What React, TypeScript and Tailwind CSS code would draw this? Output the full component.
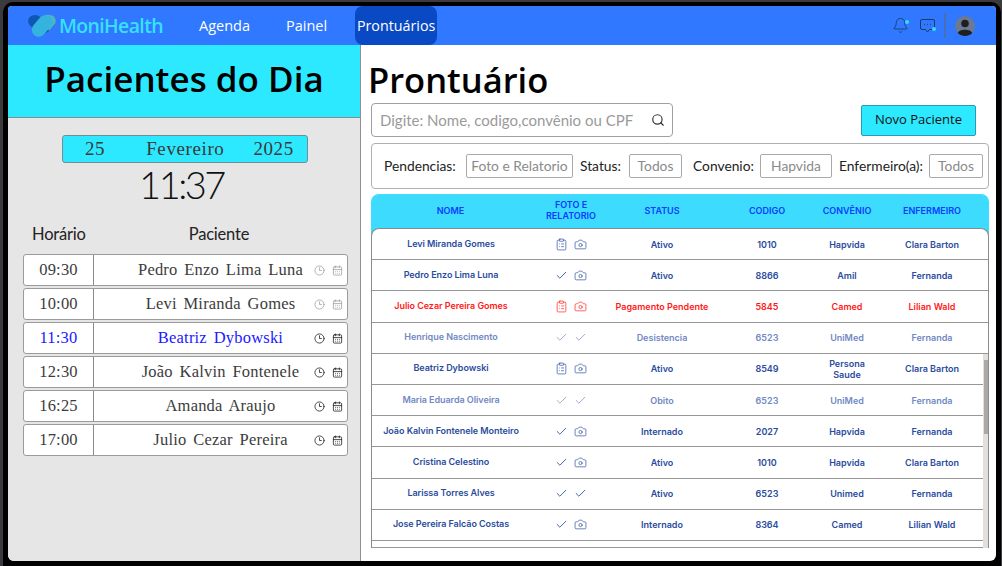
import { Bell, Camera, CalendarDays, Check, ClipboardList, Clock3, Search } from "lucide-react";

type Row = { n: string; a: "clip" | "check"; b: "cam" | "check"; s: string; c: string; v: string; e: string; t: "n" | "r" | "d" };

const rows: Row[] = [
  { n: "Levi Miranda Gomes", a: "clip", b: "cam", s: "Ativo", c: "1010", v: "Hapvida", e: "Clara Barton", t: "n" },
  { n: "Pedro Enzo Lima Luna", a: "check", b: "cam", s: "Ativo", c: "8866", v: "Amil", e: "Fernanda", t: "n" },
  { n: "Julio Cezar Pereira Gomes", a: "clip", b: "cam", s: "Pagamento Pendente", c: "5845", v: "Camed", e: "Lilian Wald", t: "r" },
  { n: "Henrique Nascimento", a: "check", b: "check", s: "Desistencia", c: "6523", v: "UniMed", e: "Fernanda", t: "d" },
  { n: "Beatriz Dybowski", a: "clip", b: "cam", s: "Ativo", c: "8549", v: "Persona Saude", e: "Clara Barton", t: "n" },
  { n: "Maria Eduarda Oliveira", a: "check", b: "check", s: "Obito", c: "6523", v: "UniMed", e: "Fernanda", t: "d" },
  { n: "João Kalvin Fontenele Monteiro", a: "check", b: "cam", s: "Internado", c: "2027", v: "Hapvida", e: "Fernanda", t: "n" },
  { n: "Cristina Celestino", a: "check", b: "cam", s: "Ativo", c: "1010", v: "Hapvida", e: "Clara Barton", t: "n" },
  { n: "Larissa Torres Alves", a: "check", b: "check", s: "Ativo", c: "6523", v: "Unimed", e: "Fernanda", t: "n" },
  { n: "Jose Pereira Falcão Costas", a: "check", b: "cam", s: "Internado", c: "8364", v: "Camed", e: "Lilian Wald", t: "n" },
];

const agenda = [
  { h: "09:30", p: "Pedro Enzo Lima Luna", tone: "dim" },
  { h: "10:00", p: "Levi Miranda Gomes", tone: "dim" },
  { h: "11:30", p: "Beatriz Dybowski", tone: "active" },
  { h: "12:30", p: "João Kalvin Fontenele", tone: "normal" },
  { h: "16:25", p: "Amanda Araujo", tone: "normal" },
  { h: "17:00", p: "Julio Cezar Pereira", tone: "normal" },
];

function Filter({ label, value, labelW, inputW, ml }: { label: string; value: string; labelW: string; inputW: string; ml: string }) {
  return (
    <div className={`flex items-center ${ml}`}>
      <span className={`${labelW} whitespace-nowrap text-[13.8px] text-[#222] font-['Lato',sans-serif]`}>{label}</span>
      <span className={`${inputW} flex h-[24px] items-center justify-center whitespace-nowrap rounded-[2px] border border-[#a9a9a9] text-[13.8px] text-[#8a8a8a] font-['Lato',sans-serif]`}>
        {value}
      </span>
    </div>
  );
}

function Logo() {
  return (
    <svg width="30" height="24" viewBox="0 0 30 24" className="shrink-0">
      <path d="M14 22 L3 11.5 C-1 7 2 1 8 1 C11 1 13 2.5 14.5 5 C16 2.5 18 1 21 1 C27 1 30 7 27 11.5 L22 17 Z" fill="#0f57b4" />
      <path d="M17 1.5 C19 0.5 23 0.5 25.5 1.5 C29 3.5 29.5 8 27.5 10.5 L22 17 L17 6 Z" fill="#4db4c4" />
      <rect x="8" y="0" width="14" height="24" rx="7" transform="rotate(40 15 12)" fill="#33b3de" />
    </svg>
  );
}

export default function App() {
  return (
    <div className="h-[566px] w-[1002px] overflow-hidden bg-[#3a3b3f] pl-[3px] pr-0 pt-[2px] font-['Inter',sans-serif]">
      <div className="h-[564px] w-[998px] rounded-t-[10px] bg-black pl-[5px] pr-[2px] pt-[4px]">
        <div className="flex h-[555px] w-[988px] flex-col overflow-hidden rounded-b-[6px] rounded-t-[4px] bg-white">
          <header className="flex h-[39px] shrink-0 items-center bg-[#2f78ff] pl-[19px] pr-[21px]">
            <Logo />
            <span className="ml-[2px] w-[102px] whitespace-nowrap text-[19.5px] font-semibold tracking-[-0.65px] text-[#38e0fa] font-['Open_Sans',sans-serif]">MoniHealth</span>
            <nav className="ml-[38px] flex h-full items-center text-[14.5px] text-white font-['Open_Sans',sans-serif]">
              <span>Agenda</span>
              <span className="ml-[36px]">Painel</span>
              <span className="ml-[28px] flex h-full w-[82px] items-center justify-center rounded-[8px] bg-[#0a49c4] text-[14.3px]">Prontuários</span>
            </nav>
            <div className="ml-auto flex items-center">
              <span className="relative">
                <Bell size={17} strokeWidth={1.2} className="text-[#1d3a66]" />
                <span className="absolute right-0 top-[3px] h-[4px] w-[4px] rounded-full bg-[#38dcf7]" />
              </span>
              <span className="relative ml-[10px]">
                <svg width="17" height="17" viewBox="0 0 17 17" fill="none" stroke="#1d3a66" strokeWidth="1">
                  <path d="M3 2.5 H14 Q15.5 2.5 15.5 4 V11 Q15.5 12.5 14 12.5 H10.5 L8.5 15 L6.5 12.5 H3 Q1.5 12.5 1.5 11 V4 Q1.5 2.5 3 2.5 Z" />
                  <path d="M5.2 7.5 H5.9 M8.2 7.5 H8.9 M11.2 7.5 H11.9" strokeWidth="1.3" />
                </svg>
                <span className="absolute bottom-[3px] right-0 h-[4px] w-[4px] rounded-full bg-[#38dcf7]" />
              </span>
              <span className="ml-[8px] h-[25px] w-[2px] bg-[#4a6fb0]" />
              <svg width="20" height="20" viewBox="0 0 20 20" className="ml-[9px]">
                <circle cx="10" cy="10" r="10" fill="#6b7a92" />
                <circle cx="10" cy="7.5" r="3.8" fill="#1f1f1f" />
                <path d="M2.8 17 C4 12.5 16 12.5 17.2 17 C15 19.3 12.5 20 10 20 C7.5 20 5 19.3 2.8 17 Z" fill="#1f1f1f" />
              </svg>
            </div>
          </header>

          <div className="flex min-h-0 flex-1">
            <aside className="flex w-[353px] shrink-0 flex-col border-r border-[#8f8f8f] bg-[#e6e6e6]">
              <div className="flex h-[73px] shrink-0 items-center justify-center border-b border-[#7f8f94] bg-[#2de9ff] pb-[5px]">
                <h1 className="text-[35px] font-[540] leading-none text-black font-['Open_Sans',sans-serif]">Pacientes do Dia</h1>
              </div>
              <div className="ml-[54px] mt-[17px] flex h-[28px] w-[246px] items-center rounded-[3px] border border-[#6f8f96] bg-[#2de9ff] text-[19px] tracking-[0.6px] text-[#3a3a3a] font-['Liberation_Serif',serif]">
                <span className="ml-[22px]">25</span>
                <span className="ml-[41px]">Fevereiro</span>
                <span className="ml-[29px]">2025</span>
              </div>
              <div className="-mt-[2px] pr-[5px] text-center text-[38px] font-light leading-[46px] tracking-[-2.5px] text-[#111] font-['Lato',sans-serif]">11:37</div>
              <div className="mt-[15px] flex text-[16.5px] leading-[24px] tracking-[-0.2px] text-[#222] font-['Lato',sans-serif]">
                <span className="ml-[24px]">Horário</span>
                <span className="ml-[103px]">Paciente</span>
              </div>
              <div className="ml-[15px] mt-[8px] flex w-[325px] flex-col gap-[2px]">
                {agenda.map((a) => {
                  const active = a.tone === "active";
                  const ic = a.tone === "dim" ? "text-[#a0a0a0]" : "text-[#1c1c1c]";
                  return (
                    <div key={a.h} className="flex h-[32px] items-stretch rounded-[3px] border border-[#9b9b9b] bg-white font-['Liberation_Serif',serif] text-[16.5px] tracking-[0.2px]">
                      <span className={`flex w-[70px] items-center justify-center border-r border-[#8a8a8a] ${active ? "text-[#1a1aff]" : "text-[#3c3c3c]"}`}>{a.h}</span>
                      <span className={`flex flex-1 items-center justify-center whitespace-nowrap pl-[38px] [word-spacing:2.5px] ${active ? "text-[#1a1aff]" : "text-[#3c3c3c]"}`}>{a.p}</span>
                      <span className={`flex w-[38px] items-center gap-[7px] pl-[5px] ${ic}`}>
                        <Clock3 size={11} strokeWidth={1.7} />
                        <CalendarDays size={11} strokeWidth={1.7} />
                      </span>
                    </div>
                  );
                })}
              </div>
            </aside>

            <main className="min-w-0 flex-1 pl-[10px] pr-[6px]">
              <h2 className="ml-[-3px] mt-[14px] text-[34.5px] font-[540] leading-[41px] text-black font-['Open_Sans',sans-serif]">Prontuário</h2>
              <div className="mt-[3px] flex items-center">
                <div className="flex h-[34px] w-[302px] items-center rounded-[4px] border border-[#a0a0a0] pl-[8px] pr-[7px]">
                  <span className="flex-1 whitespace-nowrap text-[15px] text-[#9a9a9a] font-['Lato',sans-serif]">Digite: Nome, codigo,convênio ou CPF</span>
                  <Search size={14} strokeWidth={2} className="text-[#333]" />
                </div>
                <button className="ml-[188px] h-[31px] w-[115px] rounded-[2px] border border-[#2a9bb0] bg-[#2de9ff] text-[13px] text-[#111] font-['Open_Sans',sans-serif]">Novo Paciente</button>
              </div>
              <div className="mt-[6px] flex h-[46px] w-[618px] items-center rounded-[4px] border border-[#b0b0b0] pl-[12px]">
                <Filter label="Pendencias:" value="Foto e Relatorio" labelW="w-[82px]" inputW="w-[107px]" ml="" />
                <Filter label="Status:" value="Todos" labelW="w-[49px]" inputW="w-[53px]" ml="ml-[7px]" />
                <Filter label="Convenio:" value="Hapvida" labelW="w-[67px]" inputW="w-[72px]" ml="ml-[11px]" />
                <Filter label="Enfermeiro(a):" value="Todos" labelW="w-[90px]" inputW="w-[54px]" ml="ml-[7px]" />
              </div>

              <div className="relative mt-[5px] w-[618px] overflow-hidden">
                <div className="grid h-[42px] grid-cols-[159px_82px_100px_110px_50px_117px] rounded-t-[8px] bg-[#3ddcff] pb-[10px] text-center text-[9px] font-semibold leading-[11px] text-[#0b3bff]">
                  <span className="self-center">NOME</span>
                  <span className="self-center">FOTO E<br />RELATORIO</span>
                  <span className="self-center">STATUS</span>
                  <span className="self-center">CODIGO</span>
                  <span className="self-center">CONVÊNIO</span>
                  <span className="self-center pl-[3px]">ENFERMEIRO</span>
                </div>
                <div className="relative -mt-[8px] rounded-t-[8px] border-x border-t border-[#8a8a8a] bg-white">
                  {rows.map((r) => {
                    const tone = r.t === "r" ? "text-[#ff1a1a]" : r.t === "d" ? "text-[#7189c4]" : "text-[#2a4c9e]";
                    return (
                      <div key={r.n} className={`grid h-[31.2px] grid-cols-[158px_82px_100px_110px_50px_116px] items-center border-b border-[#979797] text-center text-[9px] font-semibold leading-[11px] ${tone}`}>
                        <span className="whitespace-nowrap pb-[2px] tracking-[-0.05px]">{r.n}</span>
                        <span className="flex items-center justify-center gap-[6px]">
                          {r.a === "clip" ? <ClipboardList size={13} strokeWidth={1.25} /> : <Check size={13} strokeWidth={r.t === "d" ? 1.3 : 1.6} />}
                          {r.b === "cam" ? <Camera size={13} strokeWidth={1.25} /> : <Check size={13} strokeWidth={r.t === "d" ? 1.3 : 1.6} />}
                        </span>
                        <span className="whitespace-nowrap">{r.s}</span>
                        <span>{r.c}</span>
                        <span>{r.v}</span>
                        <span className="whitespace-nowrap pl-[4px]">{r.e}</span>
                      </div>
                    );
                  })}
                  <div className="h-[7px] border-b border-[#979797]" />
                  <div className="absolute bottom-0 right-0 top-[125px] w-[5px] bg-[#e2dfdc]">
                    <div className="ml-[1px] mt-[6px] h-[74px] w-[4px] bg-[#aba8a5]" />
                  </div>
                </div>
              </div>
            </main>
          </div>
        </div>
      </div>
    </div>
  );
}
